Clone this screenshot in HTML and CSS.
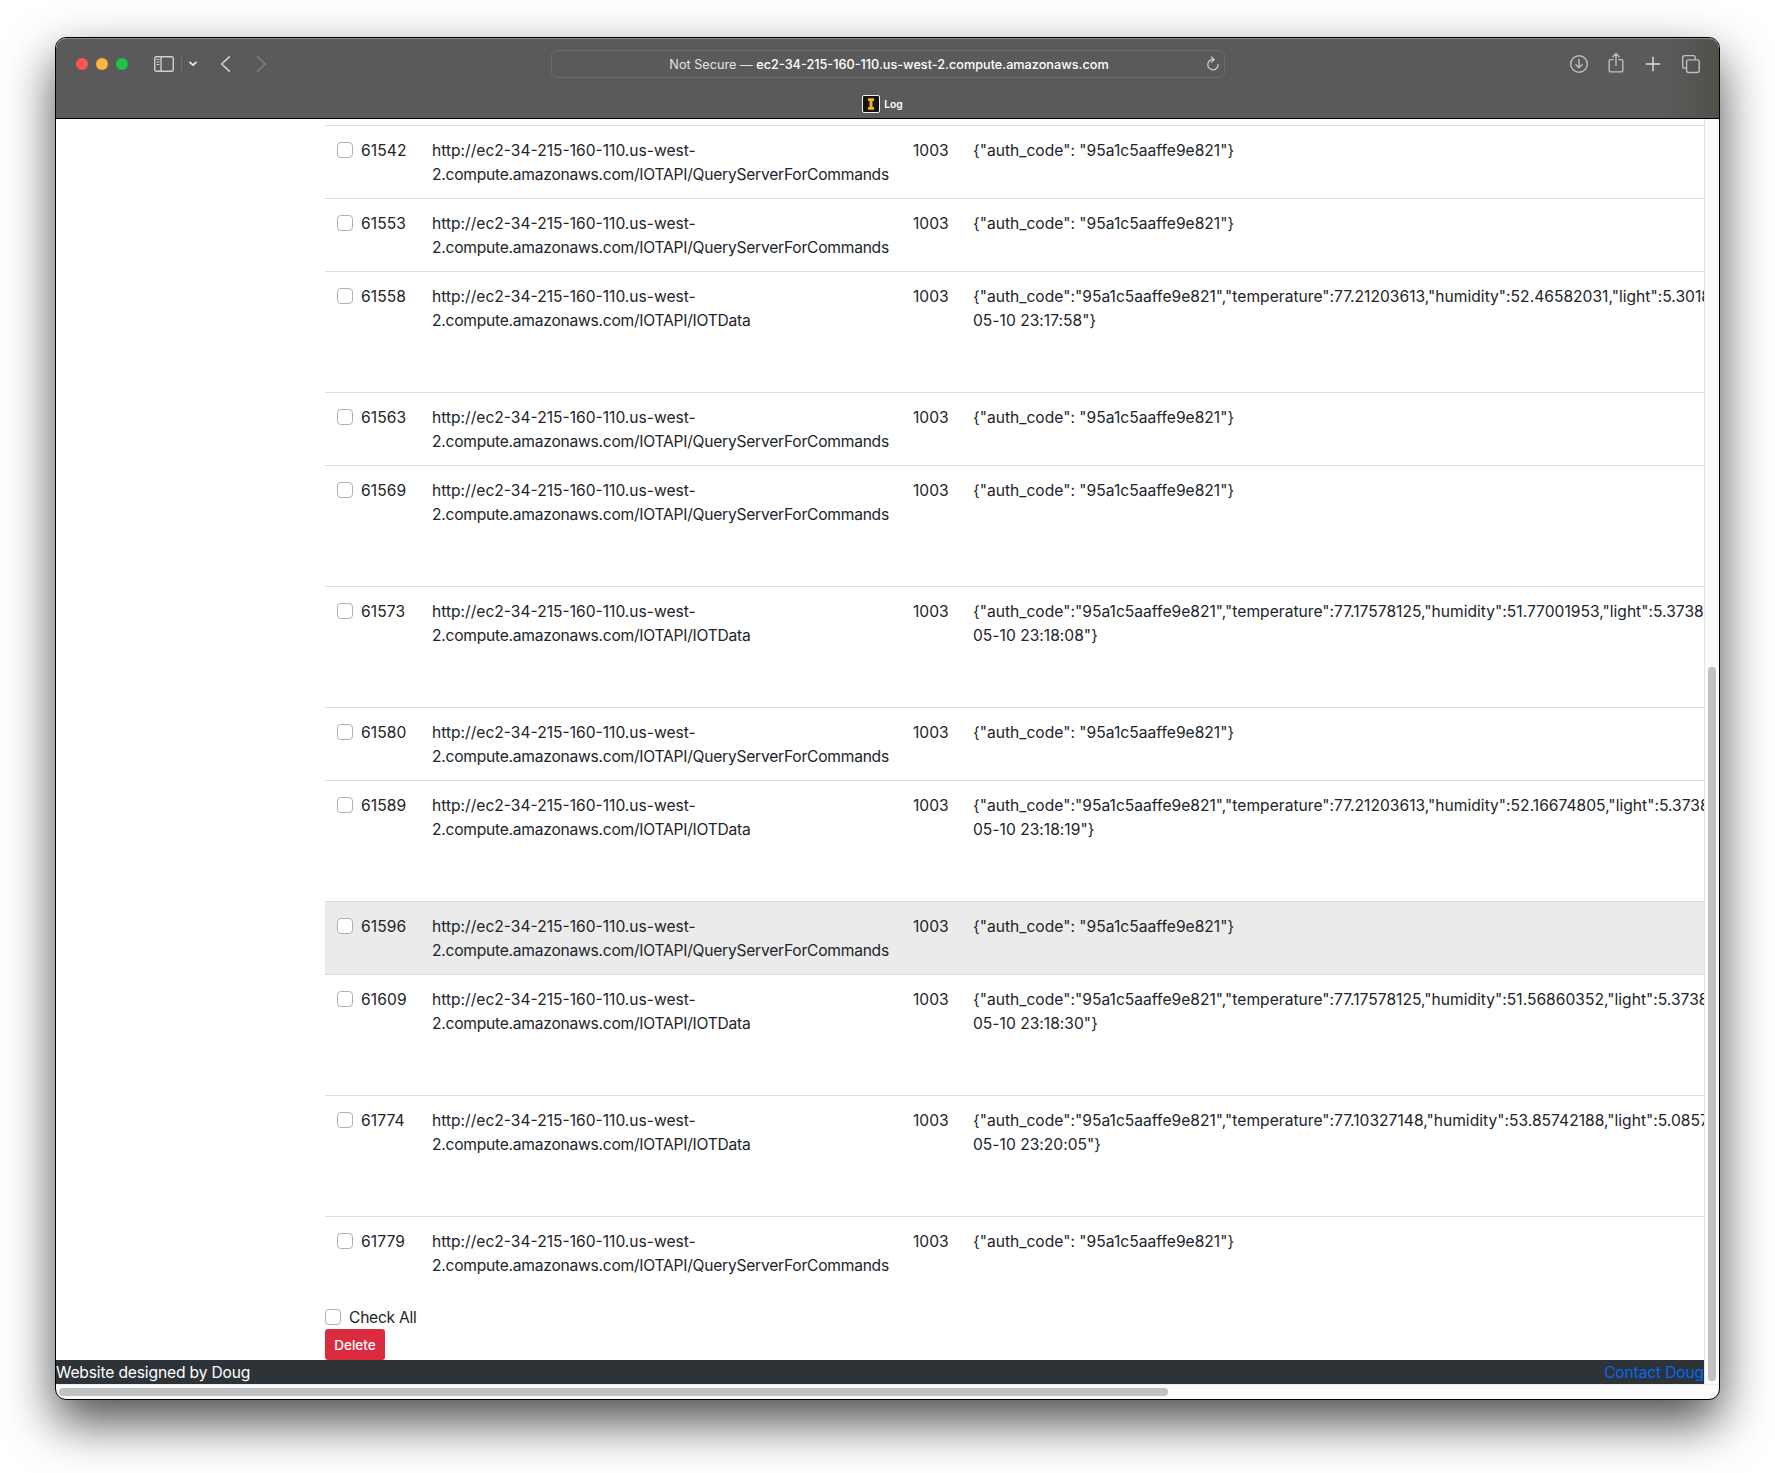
FILE: index.html
```html
<!DOCTYPE html>
<html lang="en">
<head>
<meta charset="utf-8">
<title>Log</title>
<link rel="stylesheet" href="styles.css">
</head>
<body>
<div class="window">
  <header class="chrome">
    <div class="toolbar">
      <div class="side left">
        <div class="lights"><span class="light red"></span><span class="light yellow"></span><span class="light green"></span></div>
        <svg class="icon sidebar" width="20" height="18" viewBox="0 0 20 18"><rect x=".75" y="1.75" width="18.5" height="14.5" rx="1.8"/><path d="M7 2v14"/><path class="thin" d="M2.9 4.5h2.2M2.9 7h2.2M2.9 9.5h2.2"/></svg>
        <span class="divider"></span>
        <svg class="icon caret" width="8" height="6" viewBox="0 0 8 6"><path d="M1 1.4l3 2.7 3-2.7"/></svg>
        <svg class="icon back" width="11" height="18" viewBox="0 0 11 18"><path d="M9.3 1.9L1.7 9l7.6 7.1"/></svg>
        <svg class="icon forward" width="11" height="18" viewBox="0 0 11 18"><path d="M1.7 1.9L9.3 9l-7.6 7.1"/></svg>
      </div>
      <div class="address">
        <div class="url"><span class="insecure">Not Secure —&nbsp;</span><span class="host">ec2-34-215-160-110.us-west-2.compute.amazonaws.com</span></div>
        <svg class="icon reload" width="14" height="16" viewBox="0 0 14 16"><path d="M7.2 3.4A5.2 5.2 0 1 0 12.2 8.6M5.4 1l2.7 2.5-2.7 2.6"/></svg>
      </div>
      <div class="side right">
        <svg class="icon" width="20" height="20" viewBox="0 0 20 20"><circle cx="10" cy="10" r="8.3"/><path d="M10 5.4v8.2M6.9 10.7l3.1 3.1 3.1-3.1"/></svg>
        <svg class="icon share" width="16" height="22" viewBox="0 0 16 22"><path d="M5.2 7.6H2.6Q1.2 7.6 1.2 9v9.4q0 1.5 1.4 1.5h10.8q1.4 0 1.4-1.5V9q0-1.4-1.4-1.4h-2.6M8 13.5V1.8M4.9 4.7L8 1.6l3.1 3.1"/></svg>
        <svg class="icon plus" width="16" height="16" viewBox="0 0 16 16"><path d="M8 1.2v13.6M1.2 8h13.6"/></svg>
        <svg class="icon tabs" width="20" height="20" viewBox="0 0 20 20"><rect x="5.6" y="5.9" width="12.6" height="12.6" rx="2"/><path d="M5.4 14.3H3.6q-1.9 0-1.9-1.9V3.5q0-1.9 1.9-1.9h8.7q1.9 0 1.9 1.9v2"/></svg>
      </div>
    </div>
    <div class="tabbar">
      <svg class="favicon" width="18" height="18" viewBox="0 0 18 18"><rect x=".5" y=".5" width="17" height="17" rx="1.5" fill="#141414" stroke="#f2f2f2"/><path d="M6 3.2h6v2.7h-1.5v6.2H12v2.7H6v-2.7h1.5V5.9H6z" fill="#f0ad2e"/></svg>
      <span class="tab-title">Log</span>
    </div>
  </header>
  <div class="body">
    <main class="page">
      <div class="content">
        <table class="log">
          <colgroup><col class="c-id"><col class="c-url"><col class="c-dev"><col class="c-data"></colgroup>
          <tbody>
            <tr><td><label><input type="checkbox">61542</label></td><td>http://ec2-34-215-160-110.us-west-<br><span class="path">2.compute.amazonaws.com/IOTAPI/QueryServerForCommands</span></td><td>1003</td><td>{"auth_code": "95a1c5aaffe9e821"}</td></tr>
            <tr><td><label><input type="checkbox">61553</label></td><td>http://ec2-34-215-160-110.us-west-<br><span class="path">2.compute.amazonaws.com/IOTAPI/QueryServerForCommands</span></td><td>1003</td><td>{"auth_code": "95a1c5aaffe9e821"}</td></tr>
            <tr class="tall"><td><label><input type="checkbox">61558</label></td><td>http://ec2-34-215-160-110.us-west-<br><span class="path">2.compute.amazonaws.com/IOTAPI/IOTData</span></td><td>1003</td><td>{"auth_code":"95a1c5aaffe9e821","temperature":77.21203613,"humidity":52.46582031,"light":5.3018<br>05-10 23:17:58"}</td></tr>
            <tr><td><label><input type="checkbox">61563</label></td><td>http://ec2-34-215-160-110.us-west-<br><span class="path">2.compute.amazonaws.com/IOTAPI/QueryServerForCommands</span></td><td>1003</td><td>{"auth_code": "95a1c5aaffe9e821"}</td></tr>
            <tr class="tall"><td><label><input type="checkbox">61569</label></td><td>http://ec2-34-215-160-110.us-west-<br><span class="path">2.compute.amazonaws.com/IOTAPI/QueryServerForCommands</span></td><td>1003</td><td>{"auth_code": "95a1c5aaffe9e821"}</td></tr>
            <tr class="tall"><td><label><input type="checkbox">61573</label></td><td>http://ec2-34-215-160-110.us-west-<br><span class="path">2.compute.amazonaws.com/IOTAPI/IOTData</span></td><td>1003</td><td>{"auth_code":"95a1c5aaffe9e821","temperature":77.17578125,"humidity":51.77001953,"light":5.3738<br>05-10 23:18:08"}</td></tr>
            <tr><td><label><input type="checkbox">61580</label></td><td>http://ec2-34-215-160-110.us-west-<br><span class="path">2.compute.amazonaws.com/IOTAPI/QueryServerForCommands</span></td><td>1003</td><td>{"auth_code": "95a1c5aaffe9e821"}</td></tr>
            <tr class="tall"><td><label><input type="checkbox">61589</label></td><td>http://ec2-34-215-160-110.us-west-<br><span class="path">2.compute.amazonaws.com/IOTAPI/IOTData</span></td><td>1003</td><td>{"auth_code":"95a1c5aaffe9e821","temperature":77.21203613,"humidity":52.16674805,"light":5.3738<br>05-10 23:18:19"}</td></tr>
            <tr class="active"><td><label><input type="checkbox">61596</label></td><td>http://ec2-34-215-160-110.us-west-<br><span class="path">2.compute.amazonaws.com/IOTAPI/QueryServerForCommands</span></td><td>1003</td><td>{"auth_code": "95a1c5aaffe9e821"}</td></tr>
            <tr class="tall"><td><label><input type="checkbox">61609</label></td><td>http://ec2-34-215-160-110.us-west-<br><span class="path">2.compute.amazonaws.com/IOTAPI/IOTData</span></td><td>1003</td><td>{"auth_code":"95a1c5aaffe9e821","temperature":77.17578125,"humidity":51.56860352,"light":5.3738<br>05-10 23:18:30"}</td></tr>
            <tr class="tall"><td><label><input type="checkbox">61774</label></td><td>http://ec2-34-215-160-110.us-west-<br><span class="path">2.compute.amazonaws.com/IOTAPI/IOTData</span></td><td>1003</td><td>{"auth_code":"95a1c5aaffe9e821","temperature":77.10327148,"humidity":53.85742188,"light":5.0857<br>05-10 23:20:05"}</td></tr>
            <tr><td><label><input type="checkbox">61779</label></td><td>http://ec2-34-215-160-110.us-west-<br><span class="path">2.compute.amazonaws.com/IOTAPI/QueryServerForCommands</span></td><td>1003</td><td>{"auth_code": "95a1c5aaffe9e821"}</td></tr>
          </tbody>
        </table>
        <label class="check-all"><input type="checkbox">Check All</label>
        <button class="delete" type="button">Delete</button>
      </div>
      <footer class="footer"><span>Website designed by Doug</span><a class="contact">Contact Doug</a></footer>
    </main>
    <div class="vtrack"><div class="vthumb"></div></div>
  </div>
  <div class="htrack"><div class="hthumb"></div></div>
</div>
</body>
</html>
```
FILE: styles.css
```css
* { box-sizing: border-box; }

body {
  margin: 0;
  height: 1473px;
  padding: 37px 55px 0;
  overflow: hidden;
  background: #fff;
  color: #212529;
  font: 15.6px/24px Inter, "Liberation Sans", sans-serif;
}

.window {
  width: 1665px;
  height: 1363px;
  display: flex;
  flex-direction: column;
  overflow: hidden;
  border: 1px solid #000;
  border-radius: 11px;
  background: #fafafa;
  box-shadow: 0 22px 50px rgba(0, 0, 0, .7);
}

/* browser chrome */
.chrome {
  flex: none;
  height: 81px;
  border-bottom: 1px solid #000;
  border-radius: 10px 10px 0 0;
  background: linear-gradient(90deg, #5a5a5a 1610px, #50504b);
  box-shadow: inset 0 1px 0 #888;
}
.toolbar {
  height: 52px;
  display: grid;
  grid-template-columns: 1fr 674px 1fr;
  align-items: center;
}
.side { display: flex; align-items: center; }
.left { padding-left: 20px; }
.right { padding: 0 18px 0 0; justify-content: flex-end; }
.lights { display: flex; gap: 8px; }
.light { width: 12px; height: 12px; border-radius: 50%; }
.red { background: #ff544d; }
.yellow { background: #ffb43a; }
.green { background: #19c744; }

.icon {
  display: block;
  fill: none;
  stroke: #cecece;
  stroke-width: 1.4;
  stroke-linecap: round;
  stroke-linejoin: round;
}
.thin { stroke-width: 1; }
.sidebar { margin-left: 26px; }
.divider { width: 1px; height: 18px; margin: 0 7px; background: #6e6e6e; }
.caret { stroke: #e8e8e8; stroke-width: 1.8; }
.back { margin-left: 23px; stroke-width: 1.7; }
.forward { margin-left: 25px; stroke: #7c7c7c; stroke-width: 1.7; }
.share { margin: 0 21px 2px 19px; }
.right .icon { stroke: #bebebe; }
.right .plus { stroke: #dcdcdc; }
.tabs { margin-left: 20px; }

.address {
  height: 28px;
  display: flex;
  align-items: center;
  padding: 0 4px 0 12px;
  border: 1px solid #6b6b6b;
  border-radius: 6px;
  font-size: 12.7px;
  line-height: 16px;
}
.url { flex: 1; padding: 1px 0 0 9px; text-align: center; white-space: nowrap; }
.insecure { color: #e2e2e2; }
.host { color: #fff; font-weight: 500; }
.reload { stroke-width: 1.2; }

.tabbar {
  height: 28px;
  display: flex;
  align-items: center;
  justify-content: center;
  gap: 4px;
  margin-right: 10px;
}
.tab-title { padding-top: 1px; color: #fff; font-size: 10.4px; font-weight: 600; }

/* web page */
.body { flex: none; height: 1265px; display: flex; }
.page {
  width: 1648px;
  display: flex;
  flex-direction: column;
  overflow: hidden;
  background: #fff;
}
.content {
  flex: 1;
  display: flex;
  flex-direction: column;
  align-items: flex-start;
  padding: 6px 0 0 269px;
}
.log {
  flex: none;
  width: 1500px;
  margin-bottom: 16px;
  table-layout: fixed;
  border-collapse: separate;
  border-spacing: 0;
}
.c-id { width: 95px; }
.c-url { width: 481px; }
.c-dev { width: 60px; }
.log tr { height: 73px; }
.log .tall { height: 121px; }
.log .active { background: #ebebeb; }
.log td {
  padding: 13px 12px 11px;
  vertical-align: top;
  white-space: nowrap;
  border-top: 1px solid #d9dee1;
}
.log td:nth-child(4) { letter-spacing: .015px; }
.path { letter-spacing: -.24px; }

label { display: flex; }
input {
  appearance: none;
  width: 16px;
  height: 16px;
  margin: 3px 8px 0 0;
  border: 1px solid #a9b2bb;
  border-radius: 4px;
  background: #fff;
}
.log label { letter-spacing: .1px; }
.check-all { height: 24px; padding-top: 1px; letter-spacing: -.25px; }
.delete {
  width: 60px;
  height: 31px;
  padding: 1px 0 0;
  border: 0;
  border-radius: 3px;
  background: #db2c3f;
  color: #fff;
  font: 500 13.5px/30px Inter, "Liberation Sans", sans-serif;
}
.footer {
  height: 24px;
  display: flex;
  justify-content: space-between;
  padding-top: 1px;
  background: #2e3337;
  color: #fff;
  letter-spacing: -.15px;
}
.contact { color: #0468f5; }

/* scrollbars */
.vtrack {
  flex: 1;
  padding: 548px 3px 3px;
  border-left: 1px solid #e4e4e4;
}
.vthumb { width: 8px; height: 714px; border-radius: 4px; background: #c1c1c1; }
.htrack { flex: 1; padding: 3px; border-top: 1px solid #ededed; }
.hthumb { width: 1109px; height: 8px; border-radius: 4px; background: #c1c1c1; }
```
